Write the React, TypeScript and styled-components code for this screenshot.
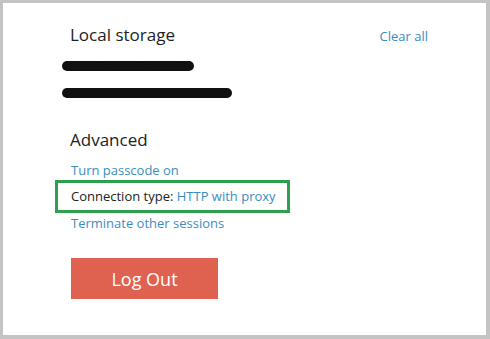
import React from "react";
import styled, { createGlobalStyle } from "styled-components";

const Global = createGlobalStyle`
  html, body { margin: 0; padding: 0; background: #c4c4c4; }
  body { font-family: "Open Sans", "Liberation Sans", sans-serif; }
`;

const Frame = styled.div`
  box-sizing: border-box;
  width: 490px;
  height: 339px;
  border-style: solid;
  border-color: #c4c4c4;
  border-width: 3px 4px 4px 3px;
  background: #ffffff;
  padding: 20px 0 0 68px;
  display: flex;
  flex-direction: column;
  align-items: flex-start;
`;

const HeaderRow = styled.div`
  width: 358px;
  margin-left: -1px;
  display: flex;
  justify-content: space-between;
  align-items: baseline;
`;

const Title = styled.div<{ $gap?: number }>`
  font-size: 17px;
  line-height: 23px;
  color: #222222;
  margin-top: ${(p) => p.$gap ?? 0}px;
`;

const AdvancedTitle = styled(Title)`
  margin-left: -1px;
`;

const Link = styled.a`
  font-size: 13px;
  line-height: 20px;
  color: #3b8cbf;
  text-decoration: none;
  cursor: pointer;
`;

const Scribble = styled.svg`
  display: block;
  margin-left: -10px;
  width: 172px;
  height: 56px;
`;

const LinkList = styled.div`
  margin-top: 9px;
  display: flex;
  flex-direction: column;
  align-items: flex-start;
`;

const Row = styled.div<{ $highlight?: boolean }>`
  font-size: 13px;
  line-height: ${(p) => (p.$highlight ? 27 : 20)}px;
  color: #222222;
  ${(p) =>
    p.$highlight
      ? `
    box-sizing: border-box;
    width: 235px;
    margin-left: -16px;
    padding-left: 13px;
    border: 3px solid #2e9e4f;
  `
      : ""}
`;

const LogoutButton = styled.button`
  margin-top: 25px;
  width: 147px;
  height: 41px;
  border: none;
  background: #df6250;
  color: #ffffff;
  font-family: "Open Sans", "Liberation Sans", sans-serif;
  font-size: 18px;
  padding: 0;
  cursor: pointer;
`;

function zig(x0: number, x1: number, y: number, amp: number, step: number) {
  let d = `M${x0} ${y}`;
  let i = 0;
  for (let x = x0 + step; x <= x1; x += step) {
    i += 1;
    d += ` L${x} ${y + (i % 2 === 0 ? -amp : amp)}`;
  }
  return d;
}

function ScribbleLines() {
  return (
    <Scribble viewBox="0 0 172 56">
      <g stroke="#111" strokeLinecap="round" strokeLinejoin="round" fill="none">
        <path d="M6 20 L128 20" strokeWidth="10" />
        <path d={zig(4, 130, 20, 3, 2.5)} strokeWidth="3" strokeOpacity="0.8" />
        <path d="M6 47 L166 47" strokeWidth="10" />
        <path d={zig(4, 168, 47, 3, 2.5)} strokeWidth="3" strokeOpacity="0.8" />
      </g>
    </Scribble>
  );
}

export default function App() {
  return (
    <>
      <Global />
      <Frame>
        <HeaderRow>
          <Title>Local storage</Title>
          <Link>Clear all</Link>
        </HeaderRow>
        <ScribbleLines />
        <AdvancedTitle $gap={26}>Advanced</AdvancedTitle>
        <LinkList>
          <Row>
            <Link>Turn passcode on</Link>
          </Row>
          <Row $highlight>
            Connection type: <Link>HTTP with proxy</Link>
          </Row>
          <Row>
            <Link>Terminate other sessions</Link>
          </Row>
        </LinkList>
        <LogoutButton>Log Out</LogoutButton>
      </Frame>
    </>
  );
}
